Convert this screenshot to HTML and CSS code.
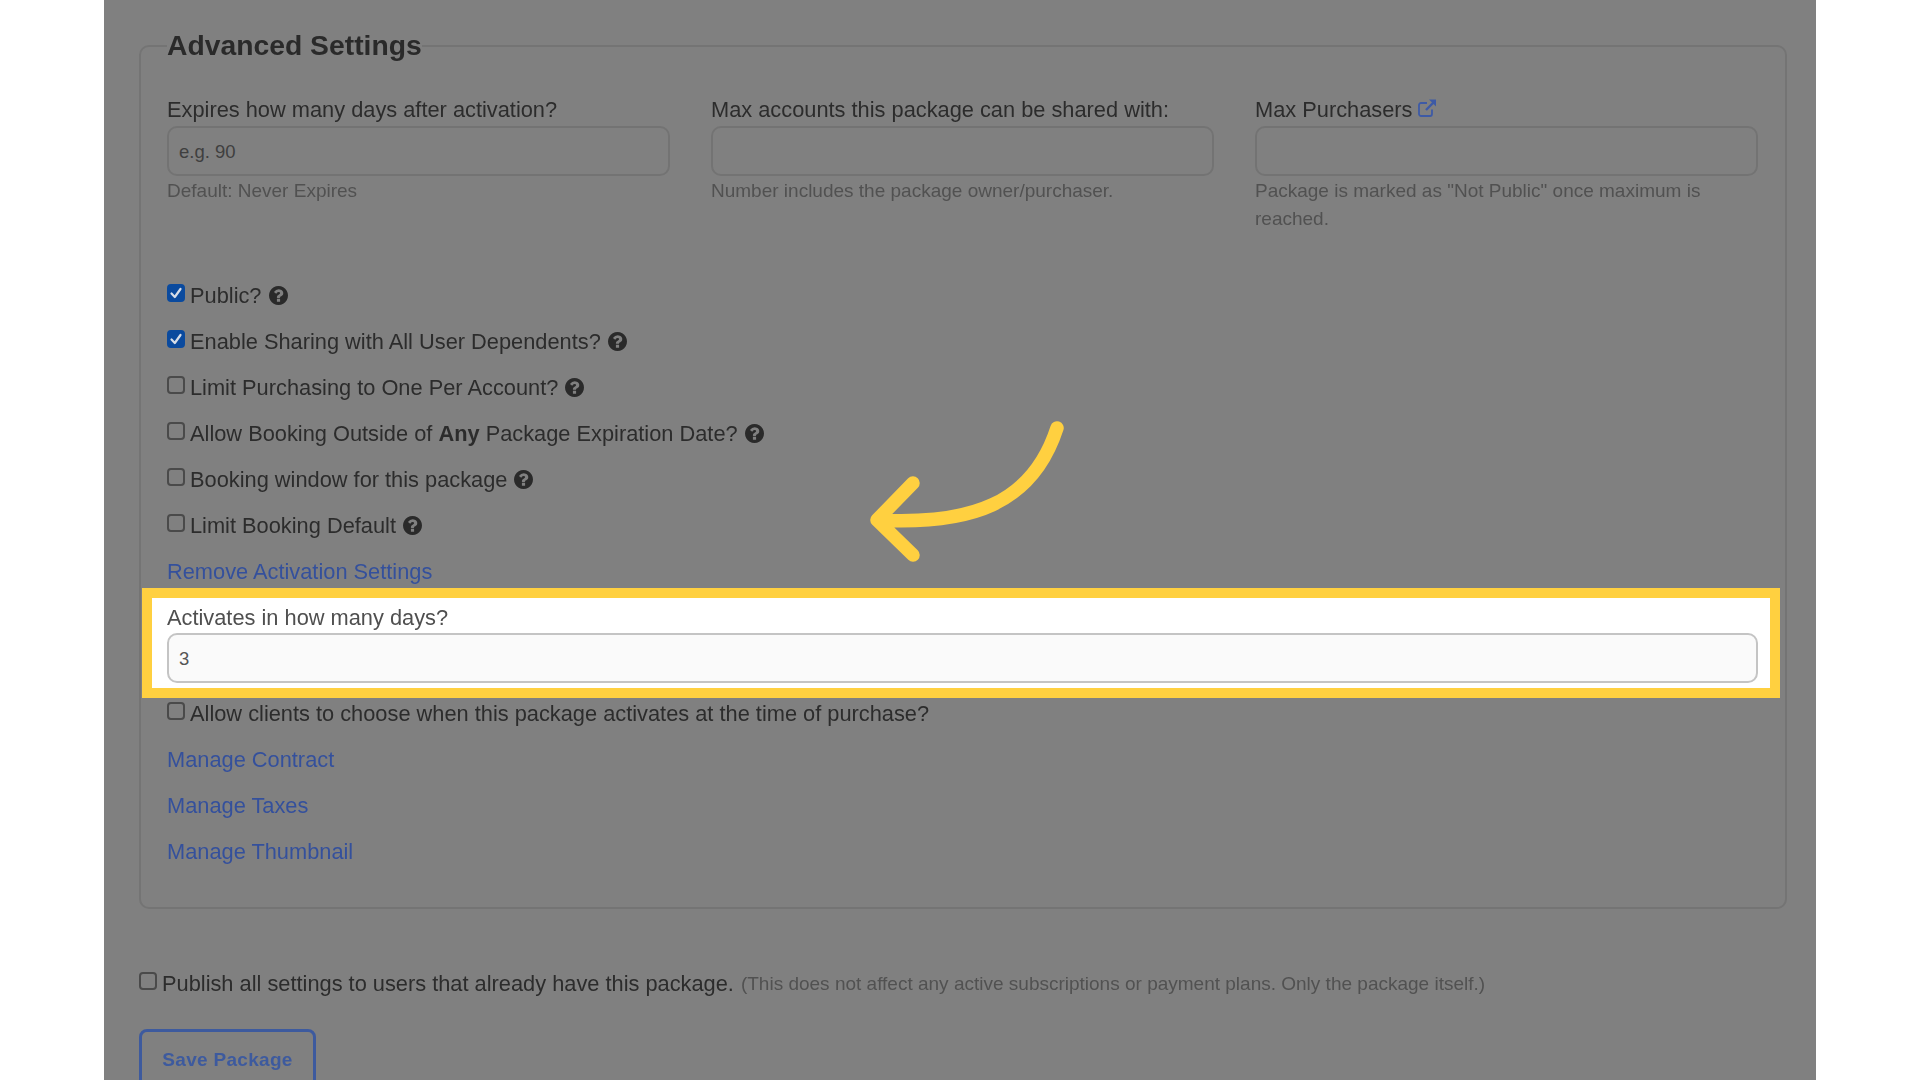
FILE: index.html
```html
<!DOCTYPE html>
<html lang="en">
<head>
<meta charset="utf-8">
<title>Advanced Settings</title>
<link rel="stylesheet" href="styles.css">
</head>
<body>
<svg class="defs" width="0" height="0" aria-hidden="true">
  <symbol id="q" viewBox="0 128 1536 1536"><path d="M896 1376v-192q0-14-9-23t-23-9h-192q-14 0-23 9t-9 23v192q0 14 9 23t23 9h192q14 0 23-9t9-23zm256-672q0-88-55.5-163t-138.5-116-170-41q-243 0-371 213-15 24 8 42l132 100q7 6 19 6 16 0 25-12 53-68 86-92 34-24 86-24 48 0 85.5 26t37.5 59q0 38-20 61t-68 45q-63 28-115.5 86.5t-52.5 125.5v36q0 14 9 23t23 9h192q14 0 23-9t9-23q0-19 21.5-49.5t54.5-49.5q32-18 49-28.5t46-35 44.5-48 28-60.5 12.5-81zm384 192q0 209-103 385.5t-279.5 279.5-385.5 103-385.5-103-279.5-279.5-103-385.5 103-385.5 279.5-279.5 385.5-103 385.5 103 279.5 279.5 103 385.5z"/></symbol>
  <symbol id="tick" viewBox="0 0 18 18"><path d="M4.5 9.5 7.8 13 13.5 5" fill="none" stroke="#d6dde8" stroke-width="2.2" stroke-linecap="round" stroke-linejoin="round"/></symbol>
</svg>
<main class="panel">
  <fieldset class="box">
    <legend class="legend">Advanced Settings</legend>
    <div class="cols">
      <div class="col">
        <label class="lbl">Expires how many days after activation?</label>
        <div class="input dim">e.g. 90</div>
        <p class="hint">Default: Never Expires</p>
      </div>
      <div class="col">
        <label class="lbl">Max accounts this package can be shared with:</label>
        <div class="input dim"></div>
        <p class="hint">Number includes the package owner/purchaser.</p>
      </div>
      <div class="col">
        <label class="lbl">Max Purchasers
          <svg class="ext" viewBox="0 0 20 20" aria-hidden="true"><path d="M15 11.5V16a2 2 0 0 1-2 2H4a2 2 0 0 1-2-2V7a2 2 0 0 1 2-2h6" fill="none" stroke="#3d5aa6" stroke-width="1.8"/><path d="M9 12 17 4" fill="none" stroke="#3d5aa6" stroke-width="2.4"/><path d="M12 1.5h7v7z" fill="#3d5aa6"/></svg>
        </label>
        <div class="input dim"></div>
        <p class="hint">Package is marked as "Not Public" once maximum is reached.</p>
      </div>
    </div>

    <div class="row"><span class="check on"><svg><use href="#tick"/></svg></span>Public?<svg class="help"><use href="#q"/></svg></div>
    <div class="row"><span class="check on"><svg><use href="#tick"/></svg></span>Enable Sharing with All User Dependents?<svg class="help"><use href="#q"/></svg></div>
    <div class="row"><span class="check"></span>Limit Purchasing to One Per Account?<svg class="help"><use href="#q"/></svg></div>
    <div class="row"><span class="check"></span><span>Allow Booking Outside of <b>Any</b> Package Expiration Date?</span><svg class="help"><use href="#q"/></svg></div>
    <div class="row"><span class="check"></span>Booking window for this package<svg class="help"><use href="#q"/></svg></div>
    <div class="row"><span class="check"></span>Limit Booking Default<svg class="help"><use href="#q"/></svg></div>
    <div class="row link">Remove Activation Settings</div>

    <section class="spot">
      <label class="lbl spot-lbl">Activates in how many days?</label>
      <div class="input lit">3</div>
    </section>

    <div class="row"><span class="check"></span>Allow clients to choose when this package activates at the time of purchase?</div>
    <div class="row link">Manage Contract</div>
    <div class="row link">Manage Taxes</div>
    <div class="row link">Manage Thumbnail</div>
  </fieldset>

  <div class="row publish"><span class="check"></span>Publish all settings to users that already have this package.<small class="note">(This does not affect any active subscriptions or payment plans. Only the package itself.)</small></div>

  <button class="save" type="button">Save Package</button>

  <svg class="arrow" viewBox="0 0 260 190" aria-hidden="true">
    <path d="M237 28C212 105 150 125 57 120M93 83 57 120 93 155" fill="none" stroke="#ffd040" stroke-width="13.5" stroke-linecap="round" stroke-linejoin="round"/>
  </svg>
</main>
</body>
</html>
```
FILE: styles.css
```css
* { box-sizing: border-box; }
html, body { margin: 0; height: 100%; }
body {
  background: #fff;
  font-family: "Liberation Sans", Arial, sans-serif;
  font-size: 21.8px;
  color: #2c2c2c;
  overflow: hidden;
}
.defs { position: absolute; }
.panel {
  position: relative;
  width: 1712px;
  height: 1080px;
  margin-left: 104px;
  padding: 28px 0 0 35px;
  background: #808080;
}
.box {
  margin: 0;
  width: 1648px;
  height: 881px;
  padding: 0 26px;
  border: 2px solid #747474;
  border-radius: 10px;
  min-inline-size: 0;
}
.legend {
  padding: 0 0 2px;
  font-size: 28.3px;
  line-height: 34px;
  font-weight: 700;
  color: #2a2a2a;
  filter: blur(.4px);
}
.cols {
  display: grid;
  grid-template-columns: repeat(3, 503px);
  column-gap: 41px;
  padding-top: 31px;
  height: 209px;
}
.lbl { display: block; line-height: 30px; filter: blur(.4px); }
.ext { width: 20px; height: 20px; vertical-align: -1px; margin-left: -2px; }
.input {
  height: 50px;
  margin-top: 1px;
  padding: 0 10px;
  border-radius: 10px;
  font-size: 18.5px;
  line-height: 48px;
}
.dim { border: 2px solid #737373; color: #3f3f3f; }
.hint {
  margin: 1px 0 0;
  font-size: 19px;
  line-height: 28px;
  color: #515151;
  filter: blur(.4px);
}
.row {
  display: flex;
  align-items: center;
  height: 46px;
  white-space: nowrap;
  filter: blur(.4px);
}
.row b { font-weight: 700; }
.check {
  flex: none;
  width: 18px;
  height: 18px;
  margin: -6px 5px 0 0;
  border: 2px solid #4a4a4a;
  border-radius: 4px;
}
.check.on { background: #0a4a9e; border-color: #0a4a9e; }
.check svg { display: block; width: 18px; height: 18px; margin: -2px; }
.help { width: 19px; height: 19px; margin: -1px 0 0 7px; fill: #2a2a2a; }
.link { color: #34509c; }
.spot {
  margin: -7px -21px -7px -25px;
  height: 110px;
  padding: 0 12px 0 15px;
  background: #fff;
  border: 10px solid #ffd040;
}
.spot-lbl { color: #4f4f4f; padding-top: 5px; height: 35px; }
.lit {
  margin-top: 0;
  border: 2px solid #c4c4c4;
  background: #fafafa;
  color: #555;
}
.publish { margin-top: 52px; }
.note { margin-left: 7px; font-size: 19px; color: #515151; }
.save {
  display: block;
  margin-top: 22px;
  width: 177px;
  height: 70px;
  padding: 0 0 8px;
  border: 3px solid #3d5a9e;
  border-radius: 8px;
  background: transparent;
  color: #3d5a9e;
  font: 700 19px "Liberation Sans", Arial, sans-serif;
  letter-spacing: .3px;
  filter: blur(.4px);
}
.arrow {
  position: absolute;
  left: 716px;
  top: 400px;
  width: 260px;
  height: 190px;
}
```
